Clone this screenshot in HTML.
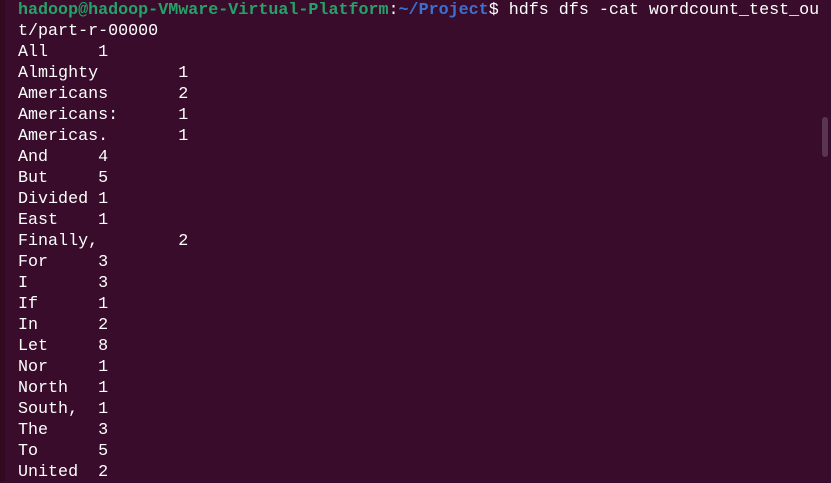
<!DOCTYPE html>
<html><head><style>
html,body{margin:0;padding:0;width:831px;height:481px;overflow:hidden;background:#380c2a;}
pre{position:absolute;left:18px;top:0px;margin:0;font-family:"Liberation Mono","DejaVu Sans Mono",monospace;font-size:16.7px;line-height:21px;color:#ffffff;tab-size:8;white-space:pre;}
.g{color:#26a269;font-weight:bold}.b{color:#3d6fcf;font-weight:bold}
.sb{position:absolute;left:822px;top:117px;width:6px;height:40px;border-radius:3px;background:#5a3550;}
.edge{position:absolute;left:0;top:0;width:5px;height:481px;background:#33091f;}
</style></head><body>
<div class="edge"></div>
<pre><span class="g">hadoop@hadoop-VMware-Virtual-Platform</span>:<span class="b">~/Project</span>$ hdfs dfs -cat wordcount_test_ou
t/part-r-00000
All	1
Almighty	1
Americans	2
Americans:	1
Americas.	1
And	4
But	5
Divided	1
East	1
Finally,	2
For	3
I	3
If	1
In	2
Let	8
Nor	1
North	1
South,	1
The	3
To	5
United	2</pre>
<div class="sb"></div>
</body></html>
